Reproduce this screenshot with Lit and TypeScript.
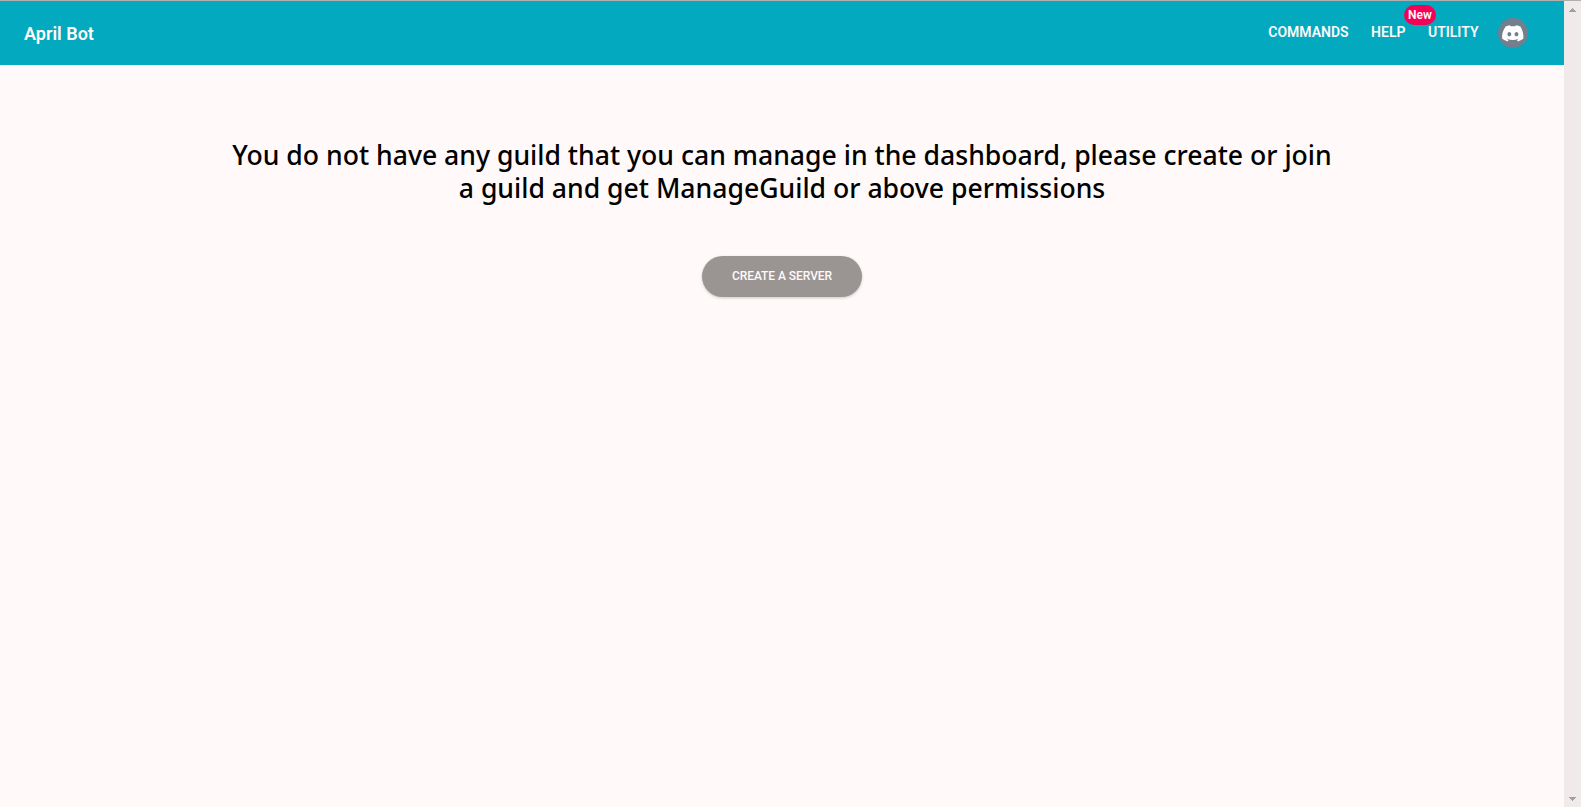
import { LitElement, html, css } from "lit";
import { customElement } from "lit/decorators.js";

@customElement("nav-bar")
class NavBar extends LitElement {
  static styles = css`
    :host { display: block; font-family: Roboto, "Liberation Sans", sans-serif; }
    .bar { box-sizing: border-box; height: 64px; background: #03a9be; color: #fff9f9; display: flex; justify-content: space-between; padding: 0 36px 0 24px; }
    .brand { font-size: 18px; font-weight: 600; line-height: 21px; margin-top: 22px; }
    .links { display: flex; gap: 22.5px; }
    .link { position: relative; font-size: 14px; font-weight: 600; line-height: 20px; margin-top: 21px; text-transform: uppercase; }
    .badge { position: absolute; left: -24px; top: -17px; width: 32px; height: 20px; border-radius: 10px; background: #f50057; font-size: 12px; line-height: 20px; text-align: center; text-transform: none; }
    .avatar { width: 30px; height: 30px; margin: 17px 0 0 -3px; }
  `;
  render() {
    return html`<div class="bar">
      <div class="brand">April Bot</div>
      <div class="links">
        <div class="link">Commands</div>
        <div class="link">Help</div>
        <div class="link">Utility<span class="badge">New</span></div>
        <svg class="avatar" viewBox="0 0 30 30">
          <circle cx="15" cy="15" r="15" fill="#747f8d" />
          <path fill="#fff" transform="translate(4.1 7.2) scale(.9 .905)" d="M20.32 1.37A19.8 19.8 0 0 0 15.43 0a13.8 13.8 0 0 0-.61 1.25 18.3 18.3 0 0 0-5.49 0A12.6 12.6 0 0 0 8.7 0a19.7 19.7 0 0 0-4.88 1.37C.53 6.05-.32 10.58.1 15.06a19.9 19.9 0 0 0 5.99 3.03c.46-.63.87-1.3 1.23-1.99a13 13 0 0 1-1.87-.9l.37-.29a14.2 14.2 0 0 0 12.06 0l.37.29a12.3 12.3 0 0 1-1.87.9c.36.69.77 1.36 1.22 1.99a19.8 19.8 0 0 0 6-3.03c.5-5.18-.84-9.67-3.28-13.69zM8.02 12.33c-1.18 0-2.16-1.08-2.16-2.42s.96-2.42 2.16-2.42 2.18 1.09 2.16 2.42c0 1.34-.96 2.42-2.16 2.42zm7.97 0c-1.18 0-2.15-1.08-2.15-2.42s.95-2.42 2.15-2.42 2.18 1.09 2.16 2.42c0 1.34-.95 2.42-2.16 2.42z" />
        </svg>
      </div>
    </div>`;
  }
}

@customElement("app-root")
class AppRoot extends LitElement {
  static styles = css`
    :host { display: block; }
    .window { box-sizing: border-box; height: 807px; border-top: 1px solid #afafb0; display: flex; background: #fff9f9; overflow: hidden; }
    .page { flex: 1; }
    .content { display: flex; flex-direction: column; align-items: center; padding-top: 74px; }
    .title { margin: 0; width: 1130px; text-align: center; font-family: "Noto Sans", sans-serif; font-weight: 500; font-size: 26.6px; line-height: 33px; color: #000; }
    .row { display: block; white-space: nowrap; }
    .button { margin-top: 51px; width: 160px; height: 41px; border: 0; border-radius: 21px; padding: 0 0 2px; background: #9a9593; color: #fff9f9; font: 500 12px Roboto, sans-serif; letter-spacing: -0.05px; box-shadow: 0 1px 3px rgba(0,0,0,.2); }
    .scroll { width: 17px; background: #f0eaea; display: flex; flex-direction: column; justify-content: space-between; align-items: center; padding: 7px 0 6px; box-sizing: border-box; }
    .arrow { width: 7px; height: 4px; fill: #a3a0a0; }
  `;
  render() {
    return html`<div class="window">
      <div class="page">
        <nav-bar></nav-bar>
        <div class="content">
          <h1 class="title">
            <span class="row">You do not have any guild that you can manage in the dashboard, please create or join</span>
            <span class="row">a guild and get ManageGuild or above permissions</span>
          </h1>
          <button class="button">CREATE A SERVER</button>
        </div>
      </div>
      <div class="scroll">
        <svg class="arrow" viewBox="0 0 7 4" shape-rendering="crispEdges"><path d="M3 0h1v1h1v1h1v1h1v1H0V3h1V2h1V1h1z" /></svg>
        <svg class="arrow" viewBox="0 0 7 4" shape-rendering="crispEdges"><path d="M0 0h7v1H6v1H5v1H4v1H3V3H2V2H1V1H0z" /></svg>
      </div>
    </div>`;
  }
}
